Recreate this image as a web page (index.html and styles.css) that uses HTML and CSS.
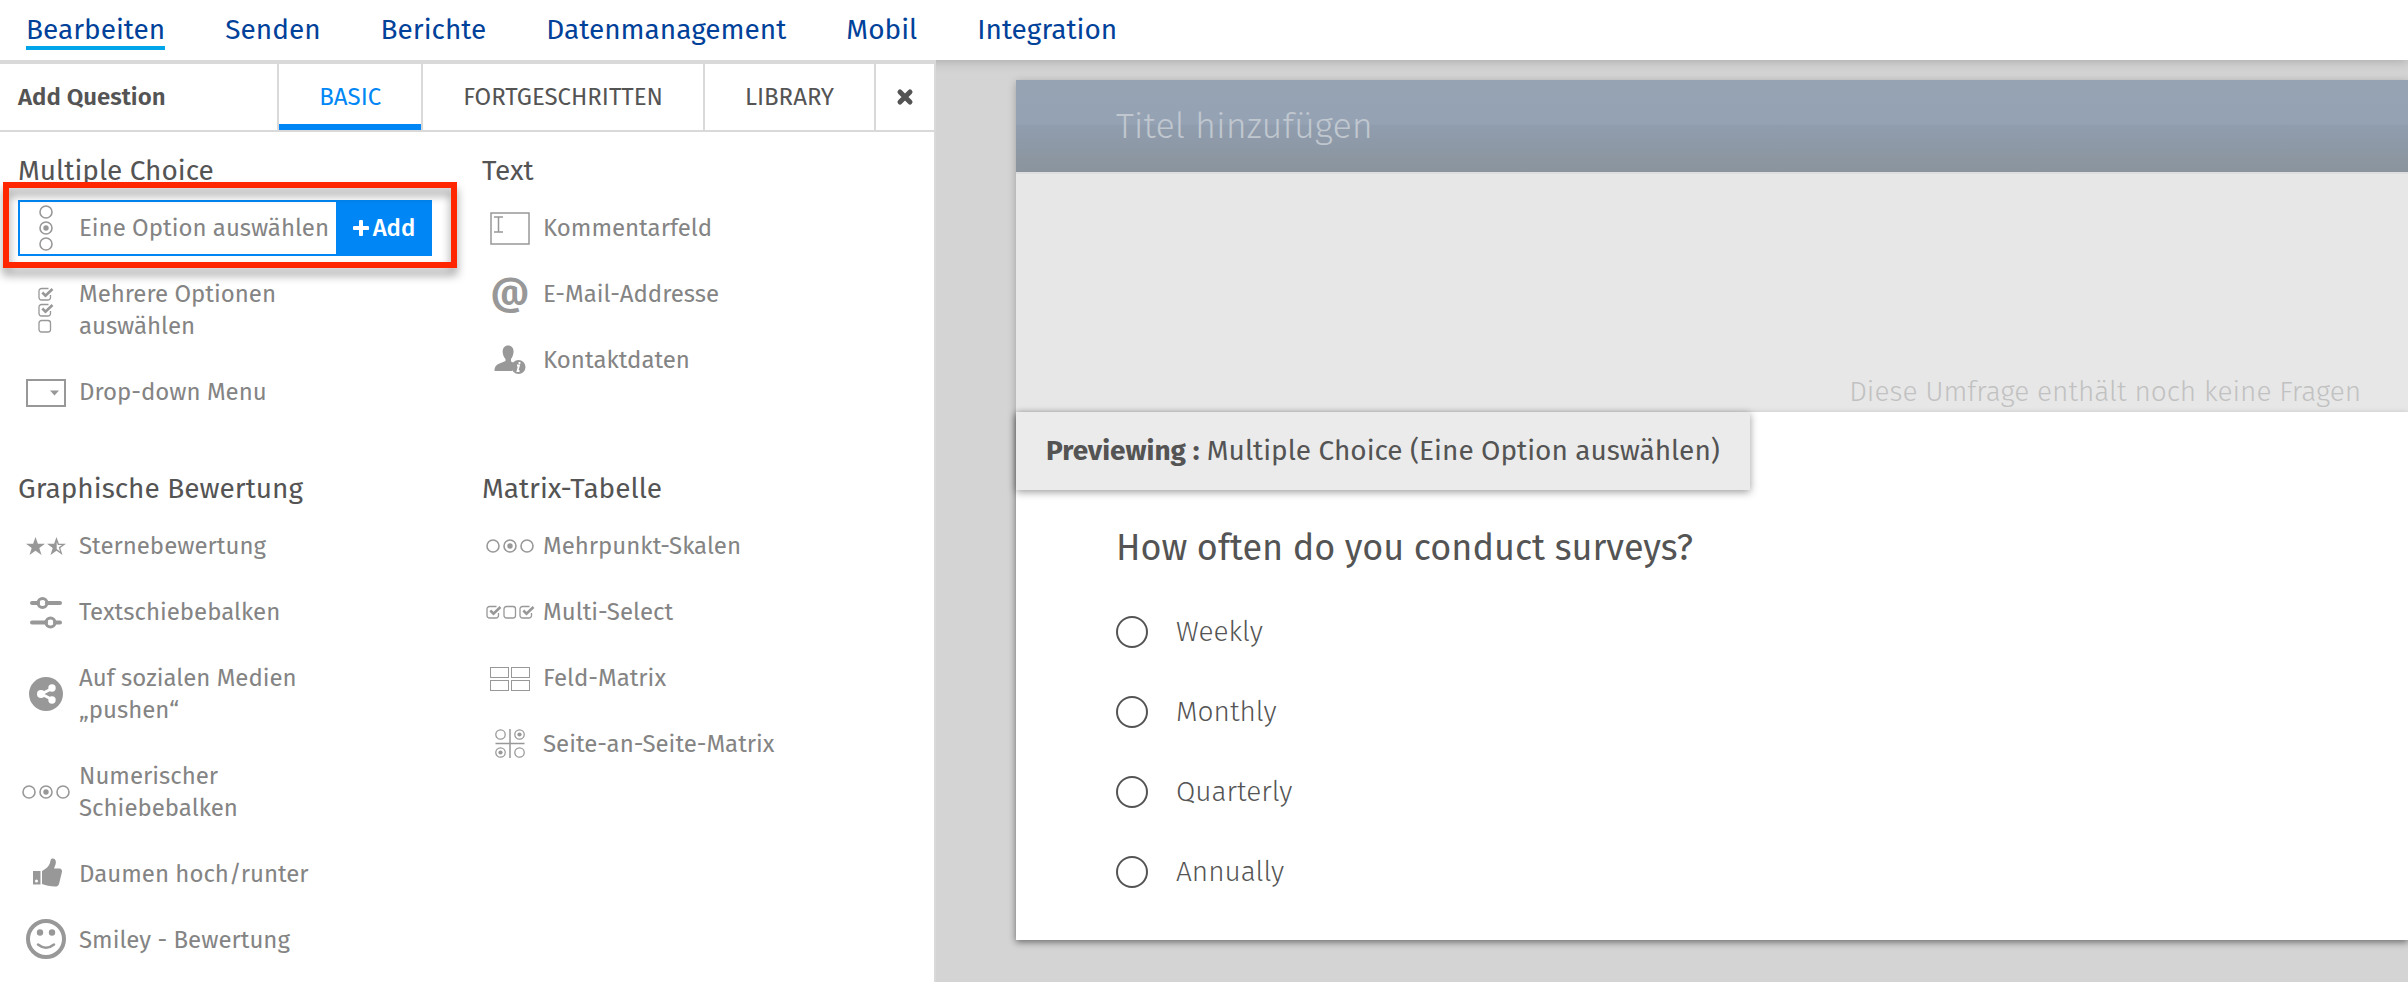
FILE: index.html
```html
<!DOCTYPE html>
<html lang="de">
  <head>
    <meta charset="UTF-8" />
    <meta name="viewport" content="width=device-width, initial-scale=1.0" />
    <title>Umfrage bearbeiten</title>
    <link rel="stylesheet" href="styles.css">
  </head>
  <body>
    <!-- shared icon shapes -->
    <svg class="defs" aria-hidden="true">
      <symbol id="radio" viewBox="0 0 14 14">
        <circle cx="7" cy="7" r="6" fill="none" stroke="currentColor" stroke-width="1.6" />
      </symbol>
      <symbol id="radio-on" viewBox="0 0 14 14">
        <circle cx="7" cy="7" r="6" fill="none" stroke="currentColor" stroke-width="1.6" />
        <circle cx="7" cy="7" r="2.7" fill="currentColor" />
      </symbol>
      <symbol id="check" viewBox="0 0 16 14">
        <rect x="1" y="1.5" width="11.5" height="11.5" rx="2.5" fill="none" stroke="currentColor" stroke-width="1.3" />
      </symbol>
      <symbol id="check-on" viewBox="0 0 16 14">
        <path d="M10.5 1.5H3.5A2.5 2.5 0 0 0 1 4v6.5A2.5 2.5 0 0 0 3.5 13h6.5a2.5 2.5 0 0 0 2.5-2.5V8" fill="none" stroke="currentColor" stroke-width="1.3" />
        <path d="M4.3 5.5l3.2 3.2L14.5 2" fill="none" stroke="currentColor" stroke-width="2.6" />
      </symbol>
    </svg>

    <nav class="topnav">
      <a class="active" href="#">Bearbeiten</a>
      <a href="#">Senden</a>
      <a href="#">Berichte</a>
      <a href="#">Datenmanagement</a>
      <a href="#">Mobil</a>
      <a href="#">Integration</a>
    </nav>

    <div class="layout">
      <aside class="panel">
        <div class="panel-head">
          <h2 class="panel-title">Add Question</h2>
          <button class="tab active">BASIC</button>
          <button class="tab">FORTGESCHRITTEN</button>
          <button class="tab">LIBRARY</button>
          <button class="tab close" aria-label="Close">
            <svg width="18" height="18" viewBox="0 0 18 18"><path d="M4 4l10 10M14 4L4 14" stroke="currentColor" stroke-width="5" stroke-linecap="round" /></svg>
          </button>
        </div>

        <div class="groups">
          <section class="group">
            <h3>Multiple Choice</h3>
            <div class="item selected">
              <svg class="icon" viewBox="0 0 56 56">
                <use href="#radio" x="21" y="5" width="14" height="14" />
                <use href="#radio-on" x="21" y="21" width="14" height="14" />
                <use href="#radio" x="21" y="37" width="14" height="14" />
              </svg>
              <span class="label">Eine Option auswählen</span>
              <button class="add">
                <svg width="16" height="16" viewBox="0 0 16 16"><path d="M8 1.5v13M1.5 8h13" stroke="currentColor" stroke-width="4" stroke-linecap="round" /></svg>Add
              </button>
              <div class="highlight"></div>
            </div>
            <div class="item">
              <svg class="icon" viewBox="0 0 56 56">
                <use href="#check-on" x="20" y="5" width="16" height="14" />
                <use href="#check-on" x="20" y="21" width="16" height="14" />
                <use href="#check" x="20" y="37" width="16" height="14" />
              </svg>
              <span class="label">Mehrere Optionen auswählen</span>
            </div>
            <div class="item">
              <svg class="icon" viewBox="0 0 56 56">
                <rect x="9" y="16" width="38" height="26" fill="none" stroke="currentColor" stroke-width="2" />
                <path d="M32 26.5h9l-4.5 5z" fill="currentColor" />
              </svg>
              <span class="label">Drop-down Menu</span>
            </div>
          </section>

          <section class="group">
            <h3>Text</h3>
            <div class="item">
              <svg class="icon" viewBox="0 0 56 56" fill="none" stroke="currentColor">
                <rect x="9" y="13" width="38" height="31" stroke-width="1.5" />
                <path d="M12 17h9M12 32h9M16.5 17v15" stroke-width="1.5" />
              </svg>
              <span class="label">Kommentarfeld</span>
            </div>
            <div class="item">
              <span class="icon at">@</span>
              <span class="label">E-Mail-Addresse</span>
            </div>
            <div class="item">
              <svg class="icon" viewBox="0 0 56 56">
                <path d="M26 13.5c4 0 6 3 5.5 7-.3 3-1.3 5-2.5 6.5v2.5l4 2c-3 2-3.5 5-2.5 7.5H12.500c0-4.5 2-6.5 5-7.5l6-2.5V27c-1.500-1.500-2.500-3.500-2.800-6.500-.4-4 1.800-7 5.300-7z" fill="currentColor" />
                <circle cx="36.5" cy="35" r="7" fill="currentColor" />
                <path d="M37.5 30v2M35 33.5h2l-1.5 5.500h2" stroke="#fff" stroke-width="1.8" fill="none" />
              </svg>
              <span class="label">Kontaktdaten</span>
            </div>
          </section>

          <section class="group">
            <h3>Graphische Bewertung</h3>
            <div class="item">
              <svg class="icon" viewBox="0 0 56 56" fill="currentColor">
                <path d="M17.5 19l2.400 6.700h7.100l-5.700 4.200 2.200 7-6-4.200-6 4.200 2.200-7-5.700-4.200h7.100z" />
                <path d="M38.500 19l2.400 6.700h7.100l-5.700 4.200 2.200 7-6-4.200-6 4.200 2.200-7-5.700-4.200h7.100zM38.700 24v7l3.300 2.400-1.200-4.200 3.200-2.300h-4.100z" fill-rule="evenodd" />
              </svg>
              <span class="label">Sternebewertung</span>
            </div>
            <div class="item">
              <svg class="icon" viewBox="0 0 56 56" fill="none" stroke="currentColor">
                <path d="M14 19h6M29 19h13M14 38.500h14M37 38.500h5" stroke-width="4" stroke-linecap="round" />
                <circle cx="24.5" cy="19" r="4.5" stroke-width="3" />
                <circle cx="32.5" cy="38.5" r="4.5" stroke-width="3" />
              </svg>
              <span class="label">Textschiebebalken</span>
            </div>
            <div class="item">
              <svg class="icon" viewBox="0 0 56 56">
                <circle cx="28" cy="28" r="17" fill="currentColor" />
                <path d="M34 22.5L23.5 28 34 33.5" stroke="#fff" stroke-width="2.8" fill="none" />
                <g fill="#fff">
                  <circle cx="34" cy="22" r="3.7" />
                  <circle cx="23" cy="28" r="4" />
                  <circle cx="34" cy="34" r="3.7" />
                </g>
              </svg>
              <span class="label">Auf sozialen Medien „pushen“</span>
            </div>
            <div class="item">
              <svg class="icon" viewBox="0 0 56 56">
                <use href="#radio" x="4" y="21" width="14" height="14" />
                <use href="#radio-on" x="21" y="21" width="14" height="14" />
                <use href="#radio" x="38" y="21" width="14" height="14" />
              </svg>
              <span class="label">Numerischer Schiebebalken</span>
            </div>
            <div class="item">
              <svg class="icon" viewBox="0 0 56 56">
                <path d="M24 25c4-2 7-5 8-8 .5-3 1-5 3-4.500 3 .5 3.300 3.500 2.500 6l-1.500 4H42c2 .5 2.500 2.500 1.700 4.500L41 38c-.7 2-2 2.500-4 2.500-5 0-9-1-13-2.500z" fill="currentColor" />
                <path d="M15 25h7.500v13.500H15z" fill="currentColor" />
                <circle cx="18.5" cy="35" r="1.5" fill="#fff" />
              </svg>
              <span class="label">Daumen hoch/runter</span>
            </div>
            <div class="item">
              <svg class="icon" viewBox="0 0 56 56">
                <circle cx="28" cy="27" r="18" fill="none" stroke="currentColor" stroke-width="4" />
                <circle cx="22" cy="20.5" r="3.2" fill="currentColor" />
                <circle cx="34" cy="20.5" r="3.2" fill="currentColor" />
                <path d="M20 32.5q8 6.500 16 0" fill="none" stroke="currentColor" stroke-width="2.5" stroke-linecap="round" />
              </svg>
              <span class="label">Smiley - Bewertung</span>
            </div>
          </section>

          <section class="group">
            <h3>Matrix-Tabelle</h3>
            <div class="item">
              <svg class="icon" viewBox="0 0 56 56">
                <use href="#radio" x="4" y="21" width="14" height="14" />
                <use href="#radio-on" x="21" y="21" width="14" height="14" />
                <use href="#radio" x="38" y="21" width="14" height="14" />
              </svg>
              <span class="label">Mehrpunkt-Skalen</span>
            </div>
            <div class="item">
              <svg class="icon" viewBox="0 0 56 56">
                <use href="#check-on" x="4" y="21" width="16" height="14" />
                <use href="#check" x="21" y="21" width="16" height="14" />
                <use href="#check-on" x="37" y="21" width="16" height="14" />
              </svg>
              <span class="label">Multi-Select</span>
            </div>
            <div class="item">
              <svg class="icon" viewBox="0 0 56 56" fill="none" stroke="currentColor" stroke-width="1">
                <rect x="8.5" y="17.5" width="18" height="10" />
                <rect x="29.5" y="17.5" width="18" height="10" />
                <rect x="8.5" y="30.5" width="18" height="10" />
                <rect x="29.5" y="30.5" width="18" height="10" />
              </svg>
              <span class="label">Feld-Matrix</span>
            </div>
            <div class="item">
              <svg class="icon" viewBox="0 0 56 56">
                <path d="M28 13v29M13.5 27.5h29" stroke="currentColor" stroke-width="1.5" />
                <use href="#radio" x="13" y="13" width="11" height="11" />
                <use href="#radio-on" x="32" y="13" width="11" height="11" />
                <use href="#radio-on" x="13" y="31" width="11" height="11" />
                <use href="#radio" x="32" y="31" width="11" height="11" />
              </svg>
              <span class="label">Seite-an-Seite-Matrix</span>
            </div>
          </section>
        </div>
      </aside>

      <main class="workspace">
        <div class="survey">
          <h1 class="survey-title">Titel hinzufügen</h1>
          <p class="survey-empty">Diese Umfrage enthält noch keine Fragen</p>
          <div class="preview">
            <p class="preview-tag"><b>Previewing :</b> Multiple Choice (Eine Option auswählen)</p>
            <fieldset class="question">
              <legend>How often do you conduct surveys?</legend>
              <label class="answer"><input type="radio" name="freq" />Weekly</label>
              <label class="answer"><input type="radio" name="freq" />Monthly</label>
              <label class="answer"><input type="radio" name="freq" />Quarterly</label>
              <label class="answer"><input type="radio" name="freq" />Annually</label>
            </fieldset>
          </div>
        </div>
      </main>
    </div>
  </body>
</html>
```
FILE: styles.css
```css
* {
  box-sizing: border-box;
  margin: 0;
  padding: 0;
}

body {
  display: flex;
  flex-direction: column;
  min-height: 100vh;
  background: #d4d4d4;
  color: #545454;
  font-family: "Fira Sans", "Noto Sans", sans-serif;
  font-size: 24px;
  line-height: 32px;
}

button {
  border: 0;
  background: none;
  color: inherit;
  font: inherit;
  cursor: pointer;
}

.defs {
  position: absolute;
  width: 0;
  height: 0;
}

/* top navigation */
.topnav {
  display: flex;
  gap: 60px;
  height: 60px;
  padding: 10px 26px;
  background: #fff;
  box-shadow: 0 0 12px rgba(0, 0, 0, 0.25);
}

.topnav a {
  height: 40px;
  color: #00419a;
  font-size: 28px;
  line-height: 40px;
  text-decoration: none;
}

.topnav a.active {
  border-bottom: 4px solid #00a4e8;
}

.layout {
  flex: 1;
  display: flex;
}

/* question panel */
.panel {
  position: relative;
  flex: 0 0 936px;
  border-top: 4px solid #d9d9d9;
  border-right: 2px solid #d9d9d9;
  background: #fff;
}

.panel-head {
  display: flex;
  height: 68px;
  border-bottom: 2px solid #d9d9d9;
}

.panel-title {
  flex: 1;
  padding-left: 18px;
  font-size: 24px;
  font-weight: 600;
  line-height: 66px;
}

.tab {
  padding: 0 40px;
  border-left: 2px solid #d9d9d9;
}

.tab.active {
  color: #0087f5;
  box-shadow: inset 0 -6px #0087f5;
}

.tab.close {
  display: flex;
  align-items: center;
  padding: 0 20px;
}

.groups {
  display: grid;
  grid-template-columns: 414px 414px;
  gap: 53px 50px;
  padding: 23px 18px 0;
}

.group {
  display: flex;
  flex-direction: column;
  gap: 10px;
}

.group h3 {
  margin-bottom: 3px;
  font-size: 28px;
  font-weight: 400;
}

.item {
  position: relative;
  display: flex;
  align-items: center;
  min-height: 56px;
  color: #848484;
}

.icon {
  flex: none;
  width: 56px;
  height: 56px;
  color: #989898;
}

.icon.at {
  font-size: 38px;
  font-weight: 600;
  line-height: 52px;
  text-align: center;
}

.label {
  width: 262px;
  padding: 12px 0 12px 5px;
}

.item.selected {
  box-shadow: inset 0 0 0 2px #0087f5;
}

.add {
  display: flex;
  flex: 1;
  align-items: center;
  justify-content: center;
  gap: 4px;
  align-self: stretch;
  background: #0087f5;
  color: #fff;
  font-weight: 500;
}

.highlight {
  position: absolute;
  inset: -18px -25px -12px -15px;
  border: 6px solid #ff2600;
  filter: drop-shadow(0 7px 5px rgba(0, 0, 0, 0.4));
  pointer-events: none;
}

/* survey canvas */
.workspace {
  flex: 1;
  min-width: 0;
  padding: 20px 0 42px 80px;
}

.survey {
  background: #e7e7e7;
  box-shadow: 0 2px 8px rgba(0, 0, 0, 0.25);
}

.survey-title {
  height: 94px;
  padding-left: 100px;
  border-bottom: 2px solid #dedede;
  background: linear-gradient(#95a3b2, #95a2b4 48%, #909dae 49%, #8a949d);
  color: #c0c7cf;
  font-size: 36px;
  font-weight: 300;
  line-height: 92px;
}

.survey-empty {
  padding: 202px 47px 4px 0;
  color: #c1c1c1;
  font-size: 28px;
  font-weight: 300;
  text-align: right;
}

.preview {
  padding-bottom: 52px;
  background: #fff;
  box-shadow: 0 2px 6px rgba(0, 0, 0, 0.3);
}

.preview-tag {
  width: fit-content;
  padding: 0 30px;
  background: #ebebeb;
  box-shadow: 0 2px 8px rgba(0, 0, 0, 0.4);
  font-size: 28px;
  line-height: 78px;
}

.question {
  display: flex;
  flex-direction: column;
  gap: 48px;
  padding: 44px 100px 0;
  border: 0;
}

.question legend {
  padding-top: 34px;
  font-size: 36px;
  line-height: 48px;
}

.answer {
  display: flex;
  align-items: center;
  gap: 28px;
  font-size: 28px;
  font-weight: 300;
}

.answer input {
  appearance: none;
  width: 32px;
  height: 32px;
  border: 2px solid #545454;
  border-radius: 50%;
}
```
